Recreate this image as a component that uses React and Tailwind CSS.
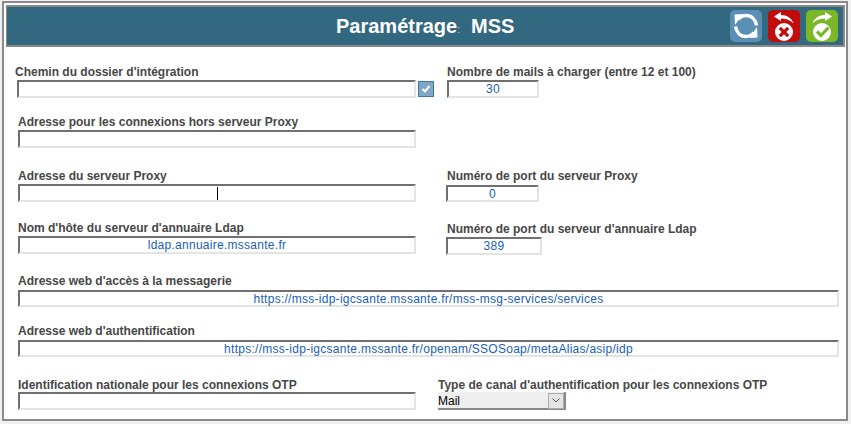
const Field = ({ value, className = '', children }) => (
  <div className={`relative h-[18px] shrink-0 border-2 border-t-[#707070] border-l-[#707070] border-r-[#e4e4e4] border-b-[#e4e4e4] bg-white text-center text-xs leading-[15px] tracking-[0.27px] text-[#1a5fb4] ${className}`}>
    {value}
    {children}
  </div>
);

const Label = ({ children, className = '' }) => (
  <div className={`h-[14px] whitespace-nowrap text-xs font-bold leading-[16px] text-[#474747] ${className}`}>{children}</div>
);

const RefreshIcon = () => (
  <svg width="32" height="32" viewBox="0 0 32 32" className="rounded-[5px] bg-[#5b8fb3]">
    <path d="M8 9.500C10.500 6.500 13 5.500 16 5.500c5.500 0 9.500 4 10.500 10" fill="none" stroke="white" strokeWidth="3.400" />
    <path d="M4.500 4.500L12.500 4 5 15z" fill="white" />
    <path d="M24 22.500C21.500 25.500 19 26.500 16 26.500c-5.500 0-9.500-4-10.500-10" fill="none" stroke="white" strokeWidth="3.400" />
    <path d="M27.500 27.500L19.500 28 27 17z" fill="white" />
  </svg>
);

const CancelIcon = () => (
  <svg width="32" height="32" viewBox="0 0 32 32" className="rounded-[5px] bg-[#c20c0c]">
    <path d="M12 5C18 4.500 23.500 7.500 25.500 13.500C22 9.500 17 8.500 12 8.500z" fill="white" />
    <path d="M6 6.500L13 2V11z" fill="white" />
    <circle cx="16" cy="22" r="9" fill="white" />
    <path d="M11.800 17.800l8.400 8.400M20.200 17.800l-8.400 8.400" stroke="#c20c0c" strokeWidth="3.200" />
  </svg>
);

const SaveIcon = () => (
  <svg width="32" height="32" viewBox="0 0 32 32" className="rounded-[5px] bg-[#7ab828]">
    <path d="M20 5C14 4.500 8.500 7.500 6.500 13.500C10 9.500 15 8.500 20 8.500z" fill="white" />
    <path d="M26 6.500L19 2V11z" fill="white" />
    <circle cx="16" cy="22" r="9" fill="white" />
    <path d="M11 21.500l4 4 7.500-8" fill="none" stroke="#7ab828" strokeWidth="3.200" />
  </svg>
);

export default function App() {
  return (
    <div className="h-[424px] w-[851px] overflow-hidden bg-[#f0f0f0] pl-0.5 pt-px font-['Liberation_Sans',Arial,sans-serif]">
      <div className="h-[420px] w-[846px] border-2 border-[#8a8a8a] bg-white pl-0.5 pr-px pt-0.5">
        <header className="flex h-[42px] items-center justify-between border-y-2 border-l border-r-2 border-[#8a8a8a] bg-[#326880] pr-[5px]">
          <h1 className="ml-[329px] text-xl font-bold leading-none text-white">
            Paramétrage<span className="text-[10px] font-normal text-[#c5d5dc]">:</span>
            <span className="ml-[11px]">MSS</span>
          </h1>
          <div className="flex gap-1.5">
            <RefreshIcon />
            <CancelIcon />
            <SaveIcon />
          </div>
        </header>

        <div className="mt-[19px] flex">
          <div className="w-[441px] shrink-0 pl-[9px]">
            <Label className="!leading-[12px]">Chemin du dossier d'intégration</Label>
            <div className="ml-0.5 flex items-center gap-0.5">
              <Field className="w-[399px]" />
              <div className="flex h-4 w-4 items-center justify-center border border-[#3d7a9c] bg-[#7fa8c7]">
                <svg width="10" height="8" viewBox="0 0 10 8"><path d="M1.500 4l2.500 2.500L8.500 1" fill="none" stroke="white" strokeWidth="2" /></svg>
              </div>
            </div>
          </div>
          <div>
            <Label className="!leading-[12px]">Nombre de mails à charger (entre 12 et 100)</Label>
            <Field value="30" className="w-[92px]" />
          </div>
        </div>

        <div className="mt-4 pl-3">
          <Label>Adresse pour les connexions hors serveur Proxy</Label>
          <Field className="mt-[2px] w-[398px]" />
        </div>

        <div className="mt-5 flex pl-3">
          <div className="w-[428px] shrink-0">
            <Label>Adresse du serveur Proxy</Label>
            <Field className="mt-[2px] w-[398px]">
              <span className="absolute left-[197px] top-px h-[13px] w-px bg-black" />
            </Field>
          </div>
          <div>
            <Label className="ml-px">Numéro de port du serveur Proxy</Label>
            <Field value="0" className="mt-[3px] !h-[17px] w-[93px]" />
          </div>
        </div>

        <div className="mt-[18px] flex pl-3">
          <div className="w-[428px] shrink-0">
            <Label>Nom d'hôte du serveur d'annuaire Ldap</Label>
            <Field value="ldap.annuaire.mssante.fr" className="mt-[2px] w-[398px]" />
          </div>
          <div>
            <Label className="ml-px mt-px">Numéro de port du serveur d'annuaire Ldap</Label>
            <Field value="389" className="mt-[2px] w-[96px]" />
          </div>
        </div>

        <div className="mt-[18px] pl-3">
          <Label>Adresse web d'accès à la messagerie</Label>
          <Field value="https://mss-idp-igcsante.mssante.fr/mss-msg-services/services" className="mt-[3px] !h-[17px] w-[821px]" />
        </div>

        <div className="mt-4 pl-3">
          <Label>Adresse web d'authentification</Label>
          <Field value="https://mss-idp-igcsante.mssante.fr/openam/SSOSoap/metaAlias/asip/idp" className="mt-[3px] !h-[17px] w-[821px]" />
        </div>

        <div className="mt-5 flex pl-3">
          <div className="w-[420px] shrink-0">
            <Label>Identification nationale pour les connexions OTP</Label>
            <Field className="mt-px w-[398px]" />
          </div>
          <div>
            <Label>Type de canal d'authentification pour les connexions OTP</Label>
            <div className="mt-px flex h-[18px] w-[128px] items-center justify-between border-b-2 border-r-2 border-[#8a8a8a] bg-[#efefef] pt-px text-xs leading-none text-black">
              <span>Mail</span>
              <span className="flex h-4 w-4 items-center justify-center border border-[#acacac] bg-[#e4e4e4]">
                <svg width="8" height="5" viewBox="0 0 8 5"><path d="M.5.500L4 4 7.500.500" fill="none" stroke="#555" /></svg>
              </span>
            </div>
          </div>
        </div>
      </div>
    </div>
  );
}
